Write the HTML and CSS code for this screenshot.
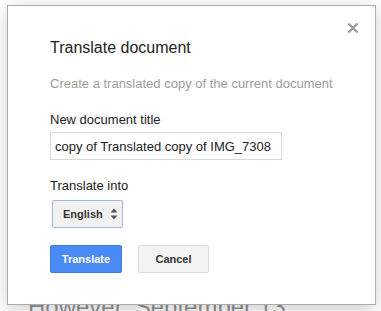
FILE: index.html
```html
<!DOCTYPE html>
<html>
<head>
<meta charset="utf-8">
<link rel="stylesheet" href="styles.css">
</head>
<body>
<div class="page">
  <p class="doc-text">However, September 13,</p>
</div>
<div class="backdrop"></div>
<div class="dialog">
  <button class="close" aria-label="Close">
    <svg width="12" height="12" viewBox="0 0 12 12"><path d="M1.5 1.5 L10.5 10.5 M10.5 1.5 L1.5 10.5" stroke="#9a9a9a" stroke-width="2.2" fill="none"/></svg>
  </button>
  <h1 class="title">Translate document</h1>
  <p class="subtitle">Create a translated copy of the current document</p>
  <label class="label">New document title</label>
  <div class="input"><span>Translated copy of Translated copy of IMG_7308</span></div>
  <label class="label label-lang">Translate into</label>
  <div class="select">
    <span>English</span>
    <svg width="8" height="12" viewBox="0 0 8 12"><path d="M4 0.5 L7.5 4.5 L0.5 4.5 Z M4 11.5 L7.5 7.5 L0.5 7.5 Z" fill="#555"/></svg>
  </div>
  <div class="buttons">
    <button class="btn btn-primary">Translate</button>
    <button class="btn btn-secondary">Cancel</button>
  </div>
</div>
</body>
</html>
```
FILE: styles.css
```css
html, body {
  margin: 0;
  padding: 0;
  width: 381px;
  height: 311px;
  overflow: hidden;
  background: #fff;
  font-family: Arial, "Liberation Sans", sans-serif;
}
.page {
  padding-top: 293px;
  padding-left: 28px;
}
.doc-text {
  margin: 0;
  font-size: 24px;
  line-height: 28px;
  color: #222;
  white-space: nowrap;
}
.backdrop {
  position: absolute;
  inset: 0;
  background: rgba(255,255,255,0.5);
}
.dialog {
  position: absolute;
  left: 7px;
  top: 5px;
  width: 283px;
  padding: 32px 42px 31px 42px;
  background: #fff;
  border: 1px solid #acacac;
  box-shadow: 0 4px 16px rgba(0,0,0,0.2);
}
.close {
  position: absolute;
  right: 16px;
  top: 16px;
  width: 12px;
  height: 12px;
  padding: 0;
  border: 0;
  background: none;
  display: block;
}
.close svg { display: block; }
.title {
  margin: 0;
  font-size: 16px;
  font-weight: normal;
  line-height: 20px;
  color: #222;
}
.subtitle {
  margin: 18px 0 0 0;
  font-size: 13px;
  line-height: 16px;
  color: #9c9c9c;
}
.label {
  display: block;
  font-size: 13px;
  line-height: 16px;
  color: #222;
  margin-top: 20px;
}
.label-lang { margin-top: 18px; }
.input {
  margin-top: 4px;
  height: 26px;
  width: 212px;
  border: 1px solid #d9d9d9;
  display: flex;
  justify-content: flex-end;
  align-items: center;
  overflow: hidden;
  padding: 0 10px 0 8px;
  font-size: 13px;
  color: #222;
  white-space: nowrap;
}
.select {
  margin-top: 6px;
  margin-left: 2px;
  width: 55px;
  height: 26px;
  border: 1px solid #a4b6e6;
  border-radius: 2px;
  background: #f1f1f1;
  display: flex;
  align-items: center;
  justify-content: space-between;
  padding: 0 4px 0 10px;
  font-size: 11px;
  font-weight: bold;
  color: #333;
}
.select svg { display: block; }
.buttons {
  margin-top: 17px;
  display: flex;
  gap: 16px;
}
.btn {
  width: 72px;
  height: 28px;
  border-radius: 2px;
  font-family: Arial, "Liberation Sans", sans-serif;
  font-size: 11px;
  font-weight: bold;
  padding: 0;
}
.btn-primary {
  background: #4a8af4;
  border: 1px solid #3c7ae4;
  color: #fff;
}
.btn-secondary {
  width: 71px;
  background: #f3f3f3;
  border: 1px solid #dcdcdc;
  color: #333;
}
```
